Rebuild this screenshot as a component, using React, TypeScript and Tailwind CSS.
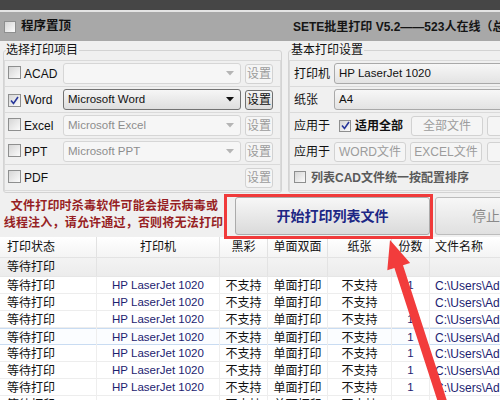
import React from 'react'

const sans = "font-['Liberation_Sans','Noto_Sans_CJK_SC',sans-serif]"

function Check({ checked = false, size = 'w-[13px] h-[13px]' }: { checked?: boolean; size?: string }) {
  return (
    <span className={`${size} shrink-0 inline-flex items-center justify-center border border-[#8e8f8f] bg-linear-to-br from-[#d6d6d6] to-[#fbfbfb]`}>
      {checked && (
        <svg width="9" height="9" viewBox="0 0 9 9">
          <path d="M1 4.5 L3.5 7.5 L8 1" fill="none" stroke="#27369a" strokeWidth="1.6" />
        </svg>
      )}
    </span>
  )
}

function Arrow({ color }: { color: string }) {
  return (
    <svg width="8" height="5" viewBox="0 0 8 5" className="shrink-0">
      <path d="M0 0 H8 L4 4.5 Z" fill={color} />
    </svg>
  )
}

type DropVariant = 'active' | 'disabled' | 'plain'

function Dropdown({ text = '', variant, width, arrow = true }: { text?: string; variant: DropVariant; width: string; arrow?: boolean }) {
  const look =
    variant === 'active'
      ? 'border-[#737373] bg-linear-to-b from-[#f6f6f6] to-[#dedede] text-[#111]'
      : variant === 'plain'
        ? 'border-[#a9a9a9] bg-linear-to-b from-[#f7f7f7] to-[#e3e3e3] text-[#111]'
        : 'border-[#d6d6d6] bg-[#f6f6f6] text-[#8d8d8d]'
  return (
    <div className={`${width} h-[21px] shrink-0 flex items-center justify-between rounded-[3px] border pl-[4px] pr-[6px] text-[11.5px] ${look}`}>
      <span className="whitespace-nowrap">{text}</span>
      {arrow && <Arrow color={variant === 'active' ? '#111' : '#b5b5b5'} />}
    </div>
  )
}

function Btn({ label, active = false, width }: { label: string; active?: boolean; width: string }) {
  return (
    <div
      className={`${width} h-[20px] shrink-0 flex items-center justify-center rounded-[3px] border text-[12px] whitespace-nowrap ${
        active ? 'border-[#707070] bg-linear-to-b from-[#f4f4f4] to-[#dcdcdc] text-[#111]' : 'border-[#d2d2d2] bg-[#f5f5f5] text-[#9c9c9c]'
      }`}
    >
      {label}
    </div>
  )
}

function Group({ title, className, children }: { title: string; className: string; children: React.ReactNode }) {
  return (
    <div className={`relative border border-[#d3d3d3] rounded-[3px] pt-[9px] pb-[1px] ${className}`}>
      <span className="absolute -top-[8px] left-[2px] bg-[#f0f0f0] pr-[1px] text-[12px] leading-[14px] text-[#111]">{title}</span>
      <div className="border border-[#dadada]">{children}</div>
    </div>
  )
}

function Row({ last = false, children }: { last?: boolean; children: React.ReactNode }) {
  return <div className={`flex items-center ${last ? 'h-[25px]' : 'h-[26px] border-b border-[#dadada]'}`}>{children}</div>
}

const apps: { name: string; value: string; checked: boolean; variant: DropVariant; drop: boolean }[] = [
  { name: 'ACAD', value: '', checked: false, variant: 'disabled', drop: true },
  { name: 'Word', value: 'Microsoft Word', checked: true, variant: 'active', drop: true },
  { name: 'Excel', value: 'Microsoft Excel', checked: false, variant: 'disabled', drop: true },
  { name: 'PPT', value: 'Microsoft PPT', checked: false, variant: 'disabled', drop: true },
  { name: 'PDF', value: '', checked: false, variant: 'disabled', drop: false },
]

const cols = 'grid grid-cols-[97px_123px_48px_60px_64px_38px_120px]'
const headers = ['打印状态', '打印机', '黑彩', '单面双面', '纸张', '份数', '文件名称']

export default function App() {
  return (
    <div className={`relative w-[500px] h-[400px] overflow-hidden bg-[#f0f0f0] text-[#111] ${sans}`}>
      <div className="h-[10px] bg-[#464646]" />
      <div className="h-[2px] bg-[#e4e4e4]" />
      <div className="h-[29px] bg-[#a8a8a8] flex items-center whitespace-nowrap">
        <div className="w-[293px] shrink-0 flex items-center gap-[5px] pl-[4px]">
          <Check size="w-[12px] h-[12px]" />
          <span className="text-[12.5px] font-bold">程序置顶</span>
        </div>
        <span className="text-[12px] font-bold text-[#151515]">SETE批里打印 V5.2——523人在线（总共</span>
      </div>

      <div className="flex items-start pt-[9px]">
        <Group title="选择打印项目" className="ml-[3px] w-[279px] shrink-0">
          {apps.map((a, i) => (
            <Row key={a.name} last={i === apps.length - 1}>
              <span className="ml-[3px]"><Check checked={a.checked} /></span>
              <span className="w-[39px] pl-[3px] text-[12px] shrink-0">{a.name}</span>
              {a.drop ? <Dropdown text={a.value} variant={a.variant} width="w-[178px] ml-[3px]" /> : <div className="w-[178px] ml-[3px] shrink-0" />}
              <span className="ml-[4px]"><Btn label="设置" active={a.checked} width="w-[28px]" /></span>
            </Row>
          ))}
        </Group>

        <Group title="基本打印设置" className="ml-[6px] w-[240px] shrink-0">
          <Row>
            <span className="w-[44px] pl-[4px] text-[12px] shrink-0">打印机</span>
            <Dropdown text="HP LaserJet 1020" variant="plain" width="w-[200px]" arrow={false} />
          </Row>
          <Row>
            <span className="w-[44px] pl-[4px] text-[12px] shrink-0">纸张</span>
            <Dropdown text="A4" variant="plain" width="w-[200px]" arrow={false} />
          </Row>
          <Row>
            <span className="w-[44px] pl-[4px] text-[12px] shrink-0">应用于</span>
            <div className="w-[77px] shrink-0 flex items-center gap-[4px] pl-[5px]">
              <Check checked size="w-[12px] h-[12px]" />
              <span className="text-[12px] font-bold whitespace-nowrap">适用全部</span>
            </div>
            <Btn label="全部文件" width="w-[72px]" />
            <span className="ml-[4px]"><Btn label="" width="w-[72px]" /></span>
          </Row>
          <Row>
            <span className="w-[44px] pl-[4px] text-[12px] shrink-0">应用于</span>
            <Btn label="WORD文件" width="w-[72px]" />
            <span className="ml-[4px]"><Btn label="EXCEL文件" width="w-[72px]" /></span>
            <span className="ml-[5px]"><Btn label="" width="w-[72px]" /></span>
          </Row>
          <Row last>
            <span className="ml-[4px]"><Check size="w-[12px] h-[12px]" /></span>
            <span className="ml-[5px] text-[12px] font-bold text-[#5a5a5a] whitespace-nowrap">列表CAD文件统一按配置排序</span>
          </Row>
        </Group>
      </div>

      <div className="h-[44px] flex items-start">
        <div className="w-[225px] h-full shrink-0 flex flex-col justify-center items-center text-[12px] tracking-[0.2px] leading-[17px] font-bold text-[#971f24] whitespace-nowrap">
          <span className="pl-[4px]">文件打印时杀毒软件可能会提示病毒或</span>
          <span className="pl-[2px]">线程注入，请允许通过，否则将无法打印</span>
        </div>
        <div className="ml-[10px] mt-[4px] w-[195px] h-[38px] shrink-0 flex items-center justify-center rounded-[3px] border border-[#ababab] bg-linear-to-b from-[#f7f7f7] to-[#dadada] text-[14px] font-bold text-[#1d2785]">
          开始打印列表文件
        </div>
        <div className="ml-[5px] mt-[4px] w-[100px] h-[38px] shrink-0 flex items-center pl-[36px] rounded-[3px] border border-[#bcbcbc] bg-linear-to-b from-[#f7f7f7] to-[#e0e0e0] text-[14px] text-[#8a8a8a]">
          停止
        </div>
      </div>

      <div className="bg-white">
        <div className={`${cols} h-[21px] border-b border-[#e3e3e3] bg-linear-to-b from-white to-[#f4f4f4] text-[12px]`}>
          {headers.map((h, i) => (
            <div key={h} className={`flex items-center border-r border-[#e2e2e2] ${i === 0 ? 'pl-[7px]' : i === 6 ? 'pl-[5px]' : 'justify-center'}`}>
              {h}
            </div>
          ))}
        </div>
        <div className={`${cols} h-[19px] border-b border-[#e6e6e6] bg-linear-to-b from-[#f3f3f3] to-[#ececec] text-[12px]`}>
          <div className="flex items-center pl-[7px] border-r border-[#e3e3e3]">等待打印</div>
          {[1, 2, 3, 4, 5, 6].map(k => (
            <div key={k} className="border-r border-[#e3e3e3]" />
          ))}
        </div>
        {Array.from({ length: 8 }).map((_, r) => (
          <div
            key={r}
            className={`${cols} h-[17px] text-[12px] ${r === 3 ? 'border-y border-[#c9dcf2] bg-[#fbfdff]' : 'border-b border-[#ededed]'}`}
          >
            <div className="flex items-center pl-[7px] border-r border-[#eeeeee]">等待打印</div>
            <div className="flex items-center justify-center border-r border-[#eeeeee] text-[11.5px] text-[#1c2270]">HP LaserJet 1020</div>
            <div className="flex items-center justify-center border-r border-[#eeeeee]">不支持</div>
            <div className="flex items-center justify-center border-r border-[#eeeeee]">单面打印</div>
            <div className="flex items-center justify-center border-r border-[#eeeeee]">不支持</div>
            <div className="flex items-center justify-center border-r border-[#eeeeee] text-[11.5px] text-[#1c2270]">1</div>
            <div className="flex items-center pl-[5px] text-[12px] text-[#1c2270] whitespace-nowrap overflow-hidden">C:\Users\Administrator</div>
          </div>
        ))}
      </div>

      {/* annotation: red box round the start button and arrow */}
      <div className="absolute left-[224px] top-[194px] w-[209px] h-[45px] border-[3px] border-[#f03a3a]" />
      <svg className="absolute inset-0 pointer-events-none" width="500" height="400" viewBox="0 0 500 400">
        <polygon
          points="390,240 410.1,262.9 403,265.2 449.9,409.8 441.3,412.6 394.4,268 387.3,270.3"
          fill="#f23c3c"
        />
      </svg>
    </div>
  )
}
